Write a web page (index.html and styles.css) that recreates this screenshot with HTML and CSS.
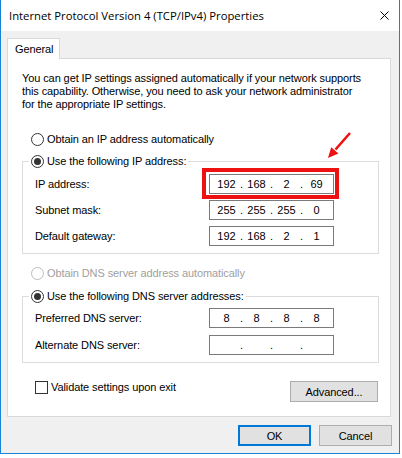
FILE: index.html
```html
<!DOCTYPE html>
<html>
<head>
	<title>Internet Protocol Version 4 (TCP/IPv4) Properties</title>
	<meta charset="utf-8" />
	<link rel="stylesheet" href="styles.css">
</head>
<body>
	<div class="window">
		<div class="titlebar">
			<span class="title">Internet Protocol Version 4 (TCP/IPv4) Properties</span>
			<svg class="close" width="9" height="9" viewBox="0 0 9 9">
				<path d="M0.5 0.5 L8.5 8.5 M8.5 0.5 L0.5 8.5" stroke="#000" stroke-width="1" fill="none" />
			</svg>
		</div>
		<div class="client">
			<div class="tabs">
				<div class="tab">General</div>
			</div>
			<div class="panel">
				<p class="intro">You can get IP settings assigned automatically if your network supports<br>this capability. Otherwise, you need to ask your network administrator<br>for the appropriate IP settings.</p>

				<div class="option"><span class="radio"></span>Obtain an IP address automatically</div>

				<fieldset class="group">
					<legend class="option"><span class="radio checked"></span>Use the following IP address:</legend>
					<div class="fields">
						<label>IP address:</label>
						<div class="ipbox">
							<span class="oct">192</span><span class="dot">.</span><span class="oct">168</span><span class="dot">.</span><span class="oct">2</span><span class="dot">.</span><span class="oct">69</span>
							<span class="highlight"></span>
							<svg class="arrow" width="36" height="36" viewBox="0 0 36 36">
								<path d="M30 7 L15.5 23.5" stroke="#ee1111" stroke-width="2.6" fill="none" />
								<path d="M8 32 L18.4 27.4 L11.2 21.2 Z" fill="#ee1111" />
							</svg>
						</div>
						<label>Subnet mask:</label>
						<div class="ipbox">
							<span class="oct">255</span><span class="dot">.</span><span class="oct">255</span><span class="dot">.</span><span class="oct">255</span><span class="dot">.</span><span class="oct">0</span>
						</div>
						<label>Default gateway:</label>
						<div class="ipbox">
							<span class="oct">192</span><span class="dot">.</span><span class="oct">168</span><span class="dot">.</span><span class="oct">2</span><span class="dot">.</span><span class="oct">1</span>
						</div>
					</div>
				</fieldset>

				<div class="option disabled option-dns"><span class="radio"></span>Obtain DNS server address automatically</div>

				<fieldset class="group group-dns">
					<legend class="option"><span class="radio checked"></span>Use the following DNS server addresses:</legend>
					<div class="fields">
						<label>Preferred DNS server:</label>
						<div class="ipbox">
							<span class="oct">8</span><span class="dot">.</span><span class="oct">8</span><span class="dot">.</span><span class="oct">8</span><span class="dot">.</span><span class="oct">8</span>
						</div>
						<label>Alternate DNS server:</label>
						<div class="ipbox">
							<span class="oct"></span><span class="dot">.</span><span class="oct"></span><span class="dot">.</span><span class="oct"></span><span class="dot">.</span><span class="oct"></span>
						</div>
					</div>
				</fieldset>

				<div class="bottom-row">
					<div class="check-option"><span class="checkbox"></span>Validate settings upon exit</div>
					<button class="btn btn-advanced">Advanced...</button>
				</div>
			</div>
			<div class="footer">
				<button class="btn btn-default">OK</button>
				<button class="btn">Cancel</button>
			</div>
		</div>
	</div>
</body>
</html>
```
FILE: styles.css
```css
body {
	margin: 0;
	background-color: #ffffff;
	font-family: "Liberation Sans", Arial, sans-serif;
	font-size: 11px;
	letter-spacing: -0.1px;
	color: #000000;
}

.window {
	width: 398px;
	height: 453px;
	border: 1px solid #1883d7;
	border-top: 0;
	display: flex;
	flex-direction: column;
	background-color: #f0f0f0;
}

	.window .titlebar {
		height: 31px;
		display: flex;
		align-items: center;
		padding-left: 8px;
		background-color: #ffffff;
	}

	.window .title {
		font-family: "Open Sans", sans-serif;
		font-size: 11.3px;
		letter-spacing: 0;
	}

	.window .close {
		margin-left: auto;
		margin-right: 10px;
		display: block;
	}

.client {
	flex: 1;
}

	.client .tabs {
		display: flex;
		margin-top: 7px;
		padding-left: 6px;
	}

	.client .tab {
		position: relative;
		z-index: 1;
		box-sizing: border-box;
		width: 53px;
		height: 21px;
		margin-bottom: -1px;
		padding-left: 7px;
		line-height: 20px;
		background-color: #ffffff;
		border: 1px solid #d9d9d9;
		border-bottom: 0;
	}

.panel {
	box-sizing: border-box;
	width: 384px;
	margin-left: 6px;
	padding: 13px 11px 14px 14px;
	background-color: #ffffff;
	border: 1px solid #d9d9d9;
}

	.panel .intro {
		margin: 0;
		line-height: 13px;
	}

.option {
	display: flex;
	align-items: center;
	height: 13px;
	line-height: 13px;
	margin: 22px 0 0 9px;
	white-space: nowrap;
}

	.option .radio {
		box-sizing: border-box;
		width: 13px;
		height: 13px;
		margin-right: 3px;
		border: 1px solid #333333;
		border-radius: 50%;
		background-color: #ffffff;
		display: flex;
		align-items: center;
		justify-content: center;
	}

		.option .radio.checked::after {
			content: "";
			width: 7px;
			height: 7px;
			border-radius: 50%;
			background-color: #333333;
		}

	.option.disabled {
		color: #a0a0a0;
	}

		.option.disabled .radio {
			border-color: #bcbcbc;
		}

	.option-dns {
		margin-top: 13px;
	}

.group {
	margin: 9px 0 0 0;
	padding: 6px 0 7px 6px;
	border: 1px solid #dcdcdc;
	min-width: 0;
}

	.group legend.option {
		margin: 0;
		padding: 0 2px;
	}

	.group .fields {
		display: grid;
		grid-template-columns: 174px 125px;
		row-gap: 6px;
		align-items: center;
		margin-left: 6px;
	}

.group-dns {
	margin-top: 10px;
	padding-top: 5px;
}

	.group-dns .fields {
		row-gap: 7px;
	}

.ipbox {
	position: relative;
	box-sizing: border-box;
	height: 20px;
	padding-left: 3px;
	border: 1px solid #7a7a7a;
	display: flex;
	align-items: center;
	line-height: 18px;
	letter-spacing: 0;
}

	.ipbox .oct {
		width: 27px;
		text-align: center;
	}

	.ipbox .dot {
		width: 3px;
		text-align: center;
	}

	.ipbox .highlight {
		position: absolute;
		left: -8px;
		top: -7px;
		width: 137px;
		height: 31px;
		box-sizing: border-box;
		border: 4px solid #ee1111;
	}

	.ipbox .arrow {
		position: absolute;
		left: 110px;
		top: -49px;
	}

.bottom-row {
	display: flex;
	justify-content: space-between;
	align-items: flex-start;
	margin-top: 18px;
	padding-right: 1px;
}

	.bottom-row .check-option {
		display: flex;
		align-items: center;
		height: 13px;
		margin-left: 13px;
		line-height: 13px;
	}

	.bottom-row .checkbox {
		box-sizing: border-box;
		width: 13px;
		height: 13px;
		margin-right: 3px;
		border: 1px solid #333333;
		background-color: #ffffff;
	}

.btn {
	box-sizing: border-box;
	width: 73px;
	height: 21px;
	padding: 0;
	font-family: "Liberation Sans", Arial, sans-serif;
	font-size: 11px;
	letter-spacing: -0.1px;
	color: #000000;
	background-color: #e1e1e1;
	border: 1px solid #adadad;
}

.btn-advanced {
	width: 88px;
}

.btn-default {
	border: 2px solid #0078d7;
}

.footer {
	display: flex;
	justify-content: flex-end;
	gap: 8px;
	margin-top: 8px;
	padding-right: 7px;
}
```
